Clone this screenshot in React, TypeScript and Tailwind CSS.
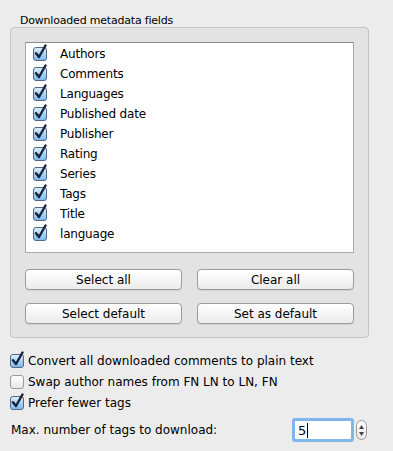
import React from "react";

function CheckedBox({ size = 14 }: { size?: number }) {
  return (
    <svg width={size + 3} height={size + 3} viewBox="0 0 17 17" className="block">
      <defs>
        <linearGradient id="cbg" x1="0" y1="0" x2="0" y2="1">
          <stop offset="0" stopColor="#e3f1fd" />
          <stop offset="0.5" stopColor="#a9d2f6" />
          <stop offset="1" stopColor="#7fb9ee" />
        </linearGradient>
      </defs>
      <rect x="0.5" y="3.5" width="13" height="13" rx="2.5" fill="url(#cbg)" stroke="#4f6a88" />
      <path d="M3 9.2 L6 13 L12.5 1.5" fill="none" stroke="#17243a" strokeWidth="2.4" strokeLinecap="round" strokeLinejoin="round" />
    </svg>
  );
}

function UncheckedBox() {
  return (
    <svg width={17} height={17} viewBox="0 0 17 17" className="block">
      <defs>
        <linearGradient id="ubg" x1="0" y1="0" x2="0" y2="1">
          <stop offset="0" stopColor="#ffffff" />
          <stop offset="1" stopColor="#e6e6e6" />
        </linearGradient>
      </defs>
      <rect x="0.5" y="3.5" width="13" height="13" rx="2.5" fill="url(#ubg)" stroke="#9a9a9a" />
    </svg>
  );
}

const fields = [
  "Authors",
  "Comments",
  "Languages",
  "Published date",
  "Publisher",
  "Rating",
  "Series",
  "Tags",
  "Title",
  "language",
];

function MacButton({ label }: { label: string }) {
  return (
    <div className="h-[21px] rounded-[4px] border border-[#9c9c9c] bg-gradient-to-b from-[#ffffff] to-[#ececec] shadow-[0_1px_0_rgba(0,0,0,0.08)] flex items-center justify-center text-[12px] text-black">
      {label}
    </div>
  );
}

export default function App() {
  return (
    <div
      className="w-[393px] h-[451px] bg-[#ececec] overflow-hidden text-black"
      style={{ fontFamily: '"DejaVu Sans", sans-serif' }}
    >
      <div className="pl-[20px] pt-[14px] text-[11px] leading-[13px] tracking-[-0.2px]">Downloaded metadata fields</div>
      <div className="ml-[10px] w-[359px] h-[311px] rounded-[4px] border border-[#c4c4c4] bg-[#e3e3e3] px-[14px] pt-[14px]">
        <div className="w-[329px] h-[211px] bg-white border border-[#a9a9a9] border-t-[#8a8a8a] pt-[1px]">
          {fields.map((f) => (
            <div key={f} className="h-[20px] flex items-center pl-[7px]">
              <div className="-mt-[3px]">
                <CheckedBox />
              </div>
              <span className="ml-[10px] text-[12px] tracking-[-0.2px]">{f}</span>
            </div>
          ))}
        </div>
        <div className="grid grid-cols-2 gap-x-[15px] gap-y-[13px] mt-[16px]">
          <MacButton label="Select all" />
          <MacButton label="Clear all" />
          <MacButton label="Select default" />
          <MacButton label="Set as default" />
        </div>
      </div>
      <div className="mt-[12px] pl-[10px]">
        <div className="h-[21px] flex items-center">
          <div className="-mt-[3px]">
            <CheckedBox />
          </div>
          <span className="ml-[1px] text-[12px]">Convert all downloaded comments to plain text</span>
        </div>
        <div className="h-[21px] flex items-center">
          <div className="-mt-[3px]">
            <UncheckedBox />
          </div>
          <span className="ml-[1px] text-[12px]">Swap author names from FN LN to LN, FN</span>
        </div>
        <div className="h-[21px] flex items-center">
          <div className="-mt-[3px]">
            <CheckedBox />
          </div>
          <span className="ml-[1px] text-[12px]">Prefer fewer tags</span>
        </div>
      </div>
      <div className="mt-[5px] pl-[11px] flex items-center h-[24px]">
        <span className="text-[12px] w-[281px]">Max. number of tags to download:</span>
        <div className="w-[62px] h-[24px] rounded-[3px] border-[3px] border-[#80b6ec] bg-white flex items-center pl-[3px]">
          <span className="text-[13px] leading-none">5</span>
          <span className="w-[1px] h-[15px] bg-black ml-[1px]" />
        </div>
        <div className="ml-[2px] w-[11px] h-[20px] rounded-full border border-[#9a9a9a] bg-gradient-to-b from-white to-[#e8e8e8] flex flex-col items-center justify-center gap-[3px]">
          <svg width="5" height="4" viewBox="0 0 5 4"><path d="M2.5 0 L5 4 L0 4 Z" fill="#444" /></svg>
          <svg width="5" height="4" viewBox="0 0 5 4"><path d="M0 0 L5 0 L2.5 4 Z" fill="#444" /></svg>
        </div>
      </div>
    </div>
  );
}
